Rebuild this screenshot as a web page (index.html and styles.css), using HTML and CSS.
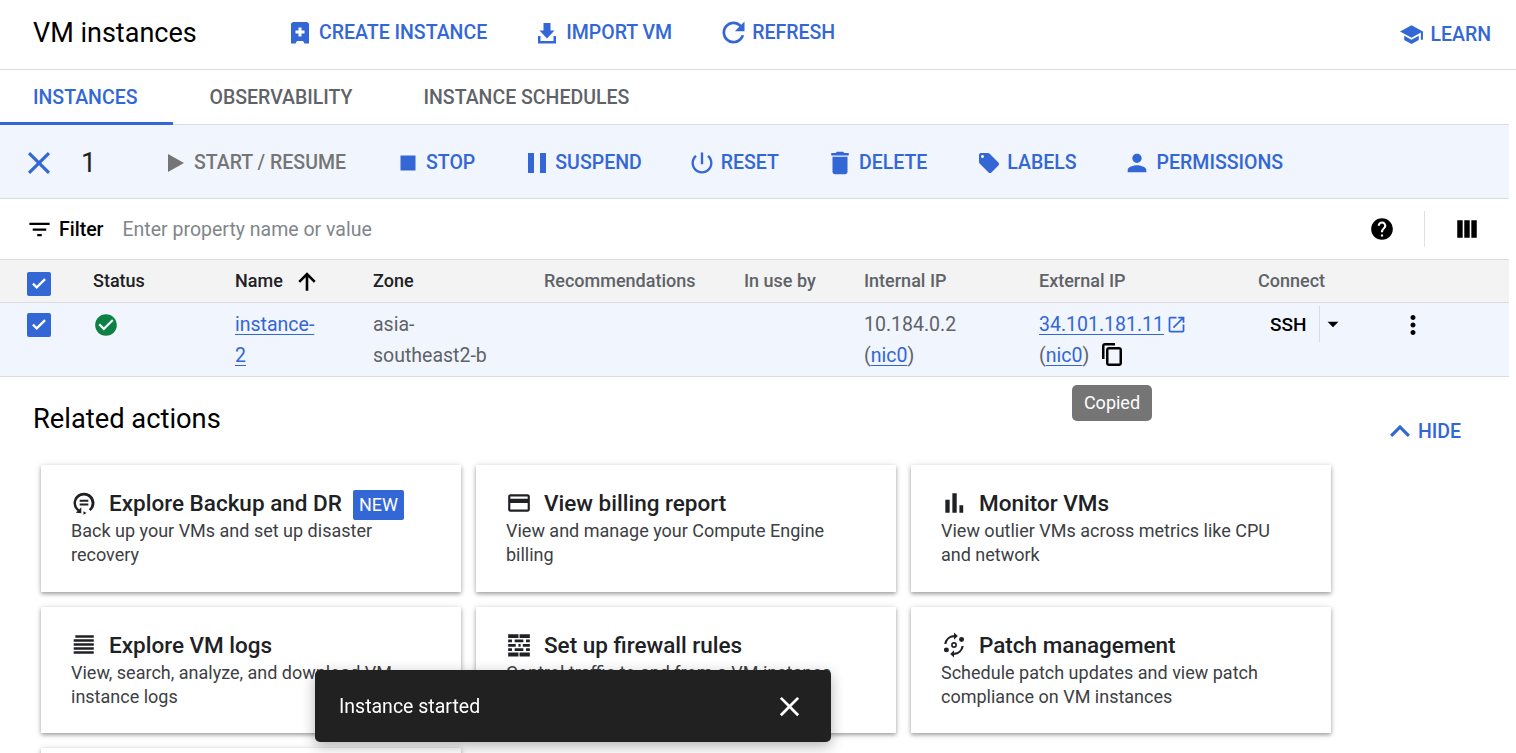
FILE: index.html
```html
<!DOCTYPE html>
<html>
<head>
<title>VM instances</title>
<meta charset="utf-8">
<link rel="stylesheet" href="styles.css">
</head>
<body>

<svg class="sprite" xmlns="http://www.w3.org/2000/svg">
	<symbol id="i-create" viewBox="0 0 24 24"><path d="M3 3.500C3 2.100 4.100 1 5.500 1h13C19.900 1 21 2.100 21 3.500V22.500h-4.500L15 20H9l-1.500 2.500H3zM10.500 6.500v3H7.500v3h3v3h3v-3h3v-3h-3v-3z" fill-rule="evenodd"/></symbol>
	<symbol id="i-import" viewBox="0 0 24 24"><path d="M15.500 9.500V2h-7v7.500H4.500l7.500 8 7.500-8zM3 15v7.500h18V15h-2.500v5h-13v-5z"/></symbol>
	<symbol id="i-refresh" viewBox="0 0 24 24"><path d="M17.650 6.350C16.200 4.900 14.210 4 12 4c-4.420 0-7.990 3.580-7.990 8s3.570 8 7.990 8c3.730 0 6.840-2.550 7.730-6h-2.080c-.82 2.330-3.040 4-5.650 4-3.310 0-6-2.690-6-6s2.690-6 6-6c1.660 0 3.140.69 4.220 1.780L13 11h7V4l-2.350 2.350z"/></symbol>
	<symbol id="i-school" viewBox="0 0 24 24"><path d="M5 13.180v4L12 21l7-3.820v-4L12 17l-7-3.820zM12 3L1 9l11 6 9-4.910V17h2V9L12 3z"/></symbol>
	<symbol id="i-close" viewBox="0 0 24 24"><path d="M19 6.410L17.590 5 12 10.590 6.410 5 5 6.410 10.590 12 5 17.590 6.410 19 12 13.410 17.590 19 19 17.590 13.410 12z"/></symbol>
	<symbol id="i-play" viewBox="0 0 24 24"><path d="M4 3v18l16-9z"/></symbol>
	<symbol id="i-stop" viewBox="0 0 24 24"><path d="M4.500 4.500h15v15h-15z"/></symbol>
	<symbol id="i-pause" viewBox="0 0 24 24"><path d="M3 2h6v20H3zM15 2h6v20h-6z"/></symbol>
	<symbol id="i-power" viewBox="0 0 24 24"><path d="M13 3h-2v10h2V3zm4.830 2.170l-1.420 1.420C17.990 7.860 19 9.810 19 12c0 3.870-3.130 7-7 7s-7-3.130-7-7c0-2.190 1.010-4.140 2.580-5.420L6.170 5.170C4.230 6.820 3 9.260 3 12c0 4.970 4.030 9 9 9s9-4.030 9-9c0-2.740-1.230-5.180-3.170-6.830z"/></symbol>
	<symbol id="i-delete" viewBox="0 0 24 24"><path d="M6 19c0 1.100.9 2 2 2h8c1.100 0 2-.9 2-2V7H6v12zM19 4h-3.500l-1-1h-5l-1 1H5v2h14V4z"/></symbol>
	<symbol id="i-label" viewBox="0 0 24 24"><path d="M21.410 11.580l-9-9C12.050 2.220 11.550 2 11 2H4c-1.100 0-2 .9-2 2v7c0 .55.22 1.050.59 1.420l9 9c.36.36.86.58 1.410.58.55 0 1.050-.22 1.410-.59l7-7c.37-.36.59-.86.59-1.410 0-.55-.23-1.060-.59-1.420zM5.500 7C4.670 7 4 6.330 4 5.500S4.670 4 5.500 4 7 4.670 7 5.500 6.330 7 5.500 7z"/></symbol>
	<symbol id="i-person" viewBox="0 0 24 24"><path d="M12 12c2.210 0 4-1.790 4-4s-1.790-4-4-4-4 1.790-4 4 1.790 4 4 4zm0 2c-2.670 0-8 1.340-8 4v2h16v-2c0-2.660-5.330-4-8-4z"/></symbol>
	<symbol id="i-filter" viewBox="0 0 24 24"><path d="M10 18h4v-2h-4v2zM3 6v2h18V6H3zm3 7h12v-2H6v2z"/></symbol>
	<symbol id="i-help" viewBox="0 0 24 24"><path d="M12 2C6.480 2 2 6.480 2 12s4.480 10 10 10 10-4.480 10-10S17.520 2 12 2zm1 17h-2v-2h2v2zm2.070-7.750l-.9.92C13.450 12.900 13 13.500 13 15h-2v-.5c0-1.100.45-2.100 1.170-2.830l1.240-1.260c.37-.36.59-.86.59-1.410 0-1.100-.9-2-2-2s-2 .9-2 2H8c0-2.210 1.790-4 4-4s4 1.790 4 4c0 .88-.36 1.680-.93 2.250z"/></symbol>
	<symbol id="i-columns" viewBox="0 0 24 24"><path d="M3 4h5v16H3zM9.500 4h5v16h-5zM16 4h5v16h-5z"/></symbol>
	<symbol id="i-up" viewBox="0 0 24 24"><path d="M4 12l1.700 1.700L10.800 8.600V21h2.400V8.600l5.100 5.100L20 12l-8-8-8 8z"/></symbol>
	<symbol id="i-ok" viewBox="0 0 24 24"><path d="M12 2C6.480 2 2 6.480 2 12s4.480 10 10 10 10-4.480 10-10S17.520 2 12 2zm-2 15l-5-5 1.410-1.410L10 14.170l7.590-7.590L19 8l-9 9z"/></symbol>
	<symbol id="i-open" viewBox="0 0 24 24"><path d="M19 19H5V5h7V3H5c-1.110 0-2 .9-2 2v14c0 1.100.89 2 2 2h14c1.100 0 2-.9 2-2v-7h-2v7zM14 3v2h3.590l-9.830 9.830 1.410 1.410L19 6.410V10h2V3h-7z"/></symbol>
	<symbol id="i-copy" viewBox="0 0 24 24"><path d="M15 1H5C3.300 1 2 2.300 2 4v13h2.500V3.500H15zM19 5H9C7.300 5 6 6.300 6 8v13c0 1.700 1.300 3 3 3h10c1.700 0 3-1.300 3-3V8c0-1.700-1.300-3-3-3zm.500 16.500h-11v-14h11z"/></symbol>
	<symbol id="i-drop" viewBox="0 0 24 24"><path d="M7 10l5 5 5-5z"/></symbol>
	<symbol id="i-more" viewBox="0 0 24 24"><path d="M12 8c1.100 0 2-.9 2-2s-.9-2-2-2-2 .9-2 2 .9 2 2 2zm0 2c-1.100 0-2 .9-2 2s.9 2 2 2 2-.9 2-2-.9-2-2-2zm0 6c-1.100 0-2 .9-2 2s.9 2 2 2 2-.9 2-2-.9-2-2-2z"/></symbol>
	<symbol id="i-less" viewBox="0 0 24 24"><path d="M12 7l-8 8 1.800 1.800L12 10.600l6.200 6.200L20 15z"/></symbol>
	<symbol id="i-check" viewBox="0 0 24 24"><path d="M9.500 17.500l-5-5 1.800-1.800 3.200 3.200 8.200-8.200 1.800 1.800z"/></symbol>
	<symbol id="i-backup" viewBox="0 0 24 24"><path d="M12 2.500a9.500 9.500 0 0 0-6 16.900L4.500 21l5 .5V16l-2 2A7.200 7.200 0 1 1 16.500 17.700L18 19.400A9.500 9.500 0 0 0 12 2.500zM8 9h8v1.800H8zM8 12.500h8v1.800H8zM11.500 19.500l2.800 1.700-2.800 1.700z"/></symbol>
	<symbol id="i-card" viewBox="0 0 24 24"><path d="M20 4H4c-1.110 0-1.990.89-1.990 2L2 18c0 1.110.89 2 2 2h16c1.110 0 2-.89 2-2V6c0-1.110-.89-2-2-2zm0 14H4v-6h16v6zm0-10H4V6h16v2z"/></symbol>
	<symbol id="i-bars" viewBox="0 0 24 24"><path d="M4 9h4v12H4zM10.500 3h4v18h-4zM17 14h3.500v7H17z"/></symbol>
	<symbol id="i-logs" viewBox="0 0 24 24"><path d="M4 3h17v2.300H4zM2.500 6.700H21V9H2.500zM2.500 10.400H21v2.300H2.500zM2.500 14.100H21v2.300H2.500zM2.500 17.800H21v2.300H2.500z"/></symbol>
	<symbol id="i-wall" viewBox="0 0 24 24"><path d="M2 2h9.500v3.500H2zM12.500 2H22v3.500h-9.500zM2 7h3.500v2.500H2zM8 7h8v2.500H8zM18.500 7H22v2.500h-3.500zM2 11h7v2.500H2zM11.500 11h2v2.500h-2zM15.500 11H22v2.500h-6.500zM2 15h3.500v2.500H2zM8 15h8v2.500H8zM18.500 15H22v2.500h-3.500zM2 19h9.500v3.500H2zM12.500 19H22v3.500h-9.500z"/></symbol>
	<symbol id="i-patch" viewBox="0 0 24 24"><path d="M12 4.800A7.500 7.500 0 0 0 5 11H3a9.500 9.500 0 0 1 9-8.200V.5L15.500 3.800 12 7.200zM12 19.200A7.500 7.500 0 0 0 19 13h2a9.500 9.500 0 0 1-9 8.200v2.300L8.500 20.200 12 16.800z"/><circle cx="19" cy="7" r="2.300"/><circle cx="5" cy="16.500" r="2.300"/><path d="M12 9.300a2.700 2.700 0 1 0 0 5.400 2.700 2.700 0 0 0 0-5.400zm0 1.500a1.200 1.200 0 1 1 0 2.400 1.200 1.200 0 0 1 0-2.400z" fill-rule="evenodd"/></symbol>
</svg>

<div class="page">

	<div class="topbar">
		<h1 class="page-title">VM instances</h1>
		<a class="btn btn-create"><svg class="ico"><use href="#i-create"/></svg>CREATE INSTANCE</a>
		<a class="btn btn-import"><svg class="ico"><use href="#i-import"/></svg>IMPORT VM</a>
		<a class="btn btn-refresh"><svg class="ico ico-33"><use href="#i-refresh"/></svg>REFRESH</a>
		<a class="btn btn-learn"><svg class="ico ico-25"><use href="#i-school"/></svg>LEARN</a>
	</div>

	<div class="tabs">
		<a class="tab tab-on">INSTANCES</a>
		<a class="tab">OBSERVABILITY</a>
		<a class="tab">INSTANCE SCHEDULES</a>
	</div>

	<div class="selbar">
		<svg class="ico ico-38 sel-x"><use href="#i-close"/></svg>
		<span class="sel-count">1</span>
		<a class="btn off"><svg class="ico"><use href="#i-play"/></svg>START / RESUME</a>
		<a class="btn btn-stop"><svg class="ico"><use href="#i-stop"/></svg>STOP</a>
		<a class="btn btn-suspend"><svg class="ico"><use href="#i-pause"/></svg>SUSPEND</a>
		<a class="btn btn-reset"><svg class="ico ico-28"><use href="#i-power"/></svg>RESET</a>
		<a class="btn btn-delete"><svg class="ico ico-30"><use href="#i-delete"/></svg>DELETE</a>
		<a class="btn btn-labels"><svg class="ico"><use href="#i-label"/></svg>LABELS</a>
		<a class="btn btn-perm"><svg class="ico ico-28"><use href="#i-person"/></svg>PERMISSIONS</a>
	</div>

	<div class="filterbar">
		<svg class="ico ico-27"><use href="#i-filter"/></svg>
		<span class="filter-label">Filter</span>
		<span class="filter-hint">Enter property name or value</span>
		<svg class="ico ico-26 filter-help"><use href="#i-help"/></svg>
		<span class="filter-sep"></span>
		<svg class="ico ico-26 filter-cols"><use href="#i-columns"/></svg>
	</div>

	<div class="grid grid-head">
		<div class="cell"><span class="check"><svg class="ico ico-22"><use href="#i-check"/></svg></span></div>
		<div class="cell strong">Status</div>
		<div class="cell strong">Name <svg class="ico ico-26 sort"><use href="#i-up"/></svg></div>
		<div class="cell strong">Zone</div>
		<div class="cell">Recommendations</div>
		<div class="cell">In use by</div>
		<div class="cell">Internal IP</div>
		<div class="cell">External IP</div>
		<div class="cell">Connect</div>
	</div>

	<div class="grid grid-row">
		<div class="cell"><span class="check"><svg class="ico ico-22"><use href="#i-check"/></svg></span></div>
		<div class="cell"><svg class="ico ico-26 st-ok"><use href="#i-ok"/></svg></div>
		<div class="cell"><a class="lnk">instance-<br>2</a></div>
		<div class="cell">asia-<br>southeast2-b</div>
		<div class="cell"></div>
		<div class="cell"></div>
		<div class="cell">10.184.0.2<br>(<a class="lnk">nic0</a>)</div>
		<div class="cell ext">
			<a class="lnk">34.101.181.11</a><svg class="ico ico-open"><use href="#i-open"/></svg><br>
			(<a class="lnk">nic0</a>)<svg class="ico ico-copy"><use href="#i-copy"/></svg>
			<div class="tooltip">Copied</div>
		</div>
		<div class="cell connect">
			<span class="ssh">SSH</span>
			<span class="ssh-drop"><svg class="ico ico-26"><use href="#i-drop"/></svg></span>
			<svg class="ico ico-30 more"><use href="#i-more"/></svg>
		</div>
	</div>

	<div class="related">
		<div class="related-head">
			<h2 class="related-title">Related actions</h2>
			<a class="btn btn-hide"><svg class="ico ico-30"><use href="#i-less"/></svg>HIDE</a>
		</div>
		<div class="cards">
			<div class="card">
				<div class="card-title"><svg class="ico ico-26"><use href="#i-backup"/></svg>Explore Backup and DR<span class="badge">NEW</span></div>
				<p class="card-text">Back up your VMs and set up disaster recovery</p>
			</div>
			<div class="card">
				<div class="card-title"><svg class="ico ico-26"><use href="#i-card"/></svg>View billing report</div>
				<p class="card-text">View and manage your Compute Engine billing</p>
			</div>
			<div class="card">
				<div class="card-title"><svg class="ico ico-26"><use href="#i-bars"/></svg>Monitor VMs</div>
				<p class="card-text">View outlier VMs across metrics like CPU and network</p>
			</div>
			<div class="card">
				<div class="card-title"><svg class="ico ico-26"><use href="#i-logs"/></svg>Explore VM logs</div>
				<p class="card-text">View, search, analyze, and download VM instance logs</p>
			</div>
			<div class="card">
				<div class="card-title"><svg class="ico ico-26"><use href="#i-wall"/></svg>Set up firewall rules</div>
				<p class="card-text">Control traffic to and from a VM instance</p>
			</div>
			<div class="card">
				<div class="card-title"><svg class="ico ico-26"><use href="#i-patch"/></svg>Patch management</div>
				<p class="card-text">Schedule patch updates and view patch compliance on VM instances</p>
			</div>
			<div class="card"></div>
		</div>
	</div>

</div>

<div class="toast">
	<span>Instance started</span>
	<svg class="ico ico-33"><use href="#i-close"/></svg>
</div>

</body>
</html>
```

FILE: styles.css
```css
* {
	box-sizing: border-box;
}

html, body {
	margin: 0;
	padding: 0;
	height: 753px;
	overflow: hidden;
	background: #fff;
	font-family: Roboto, "Liberation Sans", sans-serif;
	font-size: 19.5px;
	color: #5f6368;
}

.sprite {
	display: none;
}

.ico {
	width: 24px;
	height: 24px;
	fill: currentColor;
	flex: none;
}

.ico-22 { width: 22px; height: 22px; }
.ico-25 { width: 25px; height: 25px; }
.ico-26 { width: 26px; height: 26px; }
.ico-27 { width: 27px; height: 27px; }
.ico-28 { width: 28px; height: 28px; }
.ico-30 { width: 30px; height: 30px; }
.ico-33 { width: 33px; height: 33px; }
.ico-38 { width: 38px; height: 38px; }

.btn {
	display: flex;
	align-items: center;
	gap: 6px;
	color: #3367d6;
	font-size: 19.5px;
	font-weight: 500;
	white-space: nowrap;
}

/* top bar */
.topbar {
	display: flex;
	align-items: center;
	height: 70px;
	padding: 0 0 4px 33px;
	border-bottom: 1px solid #dadce0;
}

.page-title {
	margin: 0;
	width: 255px;
	font-size: 27px;
	font-weight: 400;
	color: #000;
}

.topbar .btn {
	gap: 7px;
}

.btn-import {
	margin-left: 48px;
}

.topbar .btn-refresh {
	margin-left: 45px;
	gap: 2px;
}

.topbar .btn-learn {
	margin-left: auto;
	margin-right: 25px;
	margin-top: 4px;
	gap: 6px;
}

/* tabs */
.tabs {
	display: flex;
	height: 55px;
	width: 1509px;
	padding-left: 33px;
	border-bottom: 1px solid #dadce0;
}

.tab {
	display: flex;
	align-items: center;
	margin-right: 71px;
	font-size: 19.5px;
	font-weight: 500;
	color: #5f6368;
}

.tab-on {
	margin-left: -33px;
	margin-right: 36px;
	padding: 2px 36px 0 33px;
	color: #3367d6;
	border-bottom: 3px solid #3367d6;
	margin-bottom: -1px;
}

/* bar shown when rows are selected */
.selbar {
	display: flex;
	align-items: center;
	width: 1509px;
	height: 74px;
	padding: 2px 0 0 20px;
	background: #f1f5fd;
	border-bottom: 1px solid #dadce0;
}

.sel-x {
	color: #3367d6;
}

.sel-count {
	width: 106px;
	padding-left: 23px;
	font-size: 27px;
	color: #202124;
}

.btn-stop, .btn-suspend, .btn-labels {
	margin-left: 50px;
}

.btn-reset {
	margin-left: 46px;
	gap: 5px;
}

.btn-delete {
	margin-left: 46px;
	gap: 4px;
}

.btn-perm {
	margin-left: 46px;
}

.btn.off {
	color: #757575;
}

/* filter */
.filterbar {
	display: flex;
	align-items: center;
	width: 1509px;
	height: 61px;
	padding-left: 26px;
	border-bottom: 1px solid #dadce0;
	color: #000;
}

.filter-label {
	margin-left: 6px;
	font-size: 19.5px;
	font-weight: 500;
}

.filter-hint {
	margin-left: 19px;
	font-size: 19.5px;
	color: #80868b;
}

.filter-help {
	margin-left: auto;
}

.filter-sep {
	width: 1px;
	height: 36px;
	margin: 0 29px;
	background: #e0e0e0;
}

.filter-cols {
	margin-right: 29px;
}

/* table */
.grid {
	display: grid;
	grid-template-columns: 66px 142px 138px 171px 200px 120px 175px 219px 1fr;
	width: 1509px;
	padding-left: 27px;
	border-bottom: 1px solid #dadce0;
}

.grid-head {
	height: 43px;
	background: #f3f3f3;
	font-size: 18px;
	font-weight: 500;
	line-height: 42px;
}

.grid-head .strong {
	color: #202124;
}

.sort {
	vertical-align: -7px;
	margin-left: 7px;
	color: #000;
}

.grid-row {
	height: 74px;
	background: #f1f5fd;
	line-height: 31px;
	padding-top: 6px;
}

.check {
	display: inline-flex;
	align-items: center;
	justify-content: center;
	width: 24px;
	height: 24px;
	border-radius: 2px;
	background: #3367d6;
	color: #fff;
}

.grid-head .check {
	margin-top: 12px;
}

.grid-head .cell:first-child {
	line-height: 0;
}

.grid-row .cell:first-child {
	line-height: 0;
	padding-top: 4px;
}

.st-ok {
	color: #0d8043;
	display: block;
	margin-top: 3px;
}

.lnk {
	color: #3367d6;
	text-decoration: underline;
	text-underline-offset: 3px;
}

.ext {
	position: relative;
}

.ico-open {
	width: 21px;
	height: 21px;
	margin-left: 2px;
	vertical-align: -4px;
	color: #3367d6;
}

.ico-copy {
	width: 24px;
	height: 24px;
	margin-left: 11px;
	vertical-align: -4px;
	color: #000;
}

.tooltip {
	position: absolute;
	top: 76px;
	left: 33px;
	width: 80px;
	height: 36px;
	border-radius: 5px;
	background: #757575;
	color: #fff;
	font-size: 18px;
	line-height: 36px;
	text-align: center;
}

.connect {
	display: flex;
	align-items: flex-start;
}

.ssh {
	margin-left: 12px;
	width: 49px;
	color: #000;
	font-size: 19px;
	font-weight: 500;
}

.ssh-drop {
	display: flex;
	align-items: center;
	height: 36px;
	margin-top: -3px;
	border-left: 1px solid #dadce0;
	width: 79px;
	color: #000;
}

.more {
	margin-top: 1px;
	color: #000;
}

/* related actions */
.related {
	padding: 0 0 0 33px;
}

.related-head {
	display: flex;
	justify-content: space-between;
	width: 1428px;
}

.related-title {
	margin: 26px 0 0 0;
	font-size: 27.3px;
	font-weight: 400;
	color: #000;
}

.btn-hide {
	margin-top: 39px;
	gap: 3px;
	height: 30px;
}

.cards {
	display: grid;
	grid-template-columns: repeat(3, 420px);
	grid-auto-rows: 126.5px;
	gap: 15px;
	margin: 0 0 0 8px;
	padding-top: 19px;
}

.card {
	padding: 23px 40px 0 30px;
	background: #fff;
	box-shadow: 0 2px 4px rgba(0, 0, 0, .35), 0 0 8px rgba(0, 0, 0, .08);
}

.card-title {
	display: flex;
	align-items: center;
	height: 30px;
	color: #202124;
	font-size: 22.5px;
	font-weight: 500;
}

.card-title .ico {
	margin-right: 12px;
	color: #202124;
}

.badge {
	margin: 3px 0 0 11px;
	padding: 0 6px;
	height: 30px;
	line-height: 30px;
	border-radius: 2px;
	background: #3367d6;
	color: #fff;
	font-size: 18px;
	font-weight: 400;
}

.card-text {
	margin: 1px 0 0 0;
	font-size: 18px;
	line-height: 24px;
	color: #3c4043;
}

/* snackbar */
.toast {
	position: fixed;
	left: 315px;
	top: 670px;
	width: 516px;
	height: 72px;
	padding: 0 25px 0 24px;
	display: flex;
	align-items: center;
	justify-content: space-between;
	border-radius: 5px;
	background: #212121;
	color: #fff;
	font-size: 19.5px;
	box-shadow: 0 4px 14px rgba(0, 0, 0, .3);
}
```
